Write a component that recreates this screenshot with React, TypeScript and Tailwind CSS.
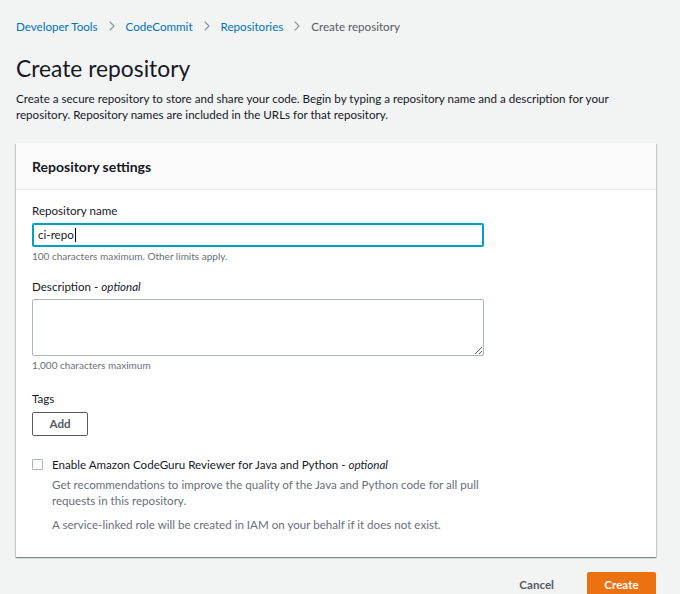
import { ChevronRight } from "lucide-react";

const crumbs = ["Developer Tools", "CodeCommit", "Repositories"];

export default function App() {
  return (
    <div
      className="min-h-[594px] w-[680px] overflow-hidden bg-[#f2f3f3] px-4 text-[#16191f]"
      style={{ fontFamily: 'Lato, Arial, sans-serif' }}
    >
      <nav className="flex h-[54px] items-center pb-[1px] text-[11.6px]">
        {crumbs.map((c) => (
          <span key={c} className="flex items-center">
            <span className="text-[#0073bb]">{c}</span>
            <ChevronRight className="mx-[6px] size-[16px] text-[#879596]" strokeWidth={1.6} />
          </span>
        ))}
        <span className="text-[#545b64]">Create repository</span>
      </nav>

      <h1 className="text-[22.8px] leading-[28px] font-normal">Create repository</h1>
      <p className="mt-[9px] pr-[30px] text-[11.6px] leading-[16px] text-[#16191f]">
        Create a secure repository to store and share your code. Begin by typing a repository name and a description for your
        repository. Repository names are included in the URLs for that repository.
      </p>

      <section className="mt-[20px] w-[640px] bg-white shadow-[0_1px_1px_0_rgba(0,28,36,0.3),1px_1px_1px_0_rgba(0,28,36,0.15),-1px_1px_1px_0_rgba(0,28,36,0.15)]">
        <div className="flex h-[47px] items-center border-b border-[#eaeded] bg-[#fafafa] px-4">
          <h2 className="text-[14px] font-bold">Repository settings</h2>
        </div>

        <div className="px-4 pt-[13px] pb-[24px]">
          <label className="block text-[11.6px] leading-[16px]">Repository name</label>
          <div className="mt-[4px] flex h-[24px] w-[452px] items-center rounded-[2px] border-2 border-[#00a1c9] px-[4px] text-[11.6px]">
            ci-repo<span className="ml-[1px] h-[14px] w-[1px] bg-black" />
          </div>
          <p className="mt-[2px] text-[10px] leading-[14px] text-[#687078]">100 characters maximum. Other limits apply.</p>

          <label className="mt-[16px] block text-[11.6px] leading-[16px]">
            Description - <i>optional</i>
          </label>
          <textarea className="mt-[4px] block h-[57px] w-[452px] rounded-[2px] border border-[#aab7b8] bg-white" />
          <p className="mt-[2px] text-[10px] leading-[14px] text-[#687078]">1,000 characters maximum</p>

          <label className="mt-[19px] block text-[11.6px] leading-[16px]">Tags</label>
          <button className="mt-[5px] block h-[24px] w-[56px] rounded-[2px] border border-[#545b64] text-[11.6px] font-bold text-[#545b64]">
            Add
          </button>

          <div className="mt-[21px] flex gap-[9px]">
            <span className="mt-[2px] size-[11px] shrink-0 rounded-[1px] border border-[#aab7b8]" />
            <div className="text-[11.6px] leading-[16px]">
              <div className="text-[#16191f]">
                Enable Amazon CodeGuru Reviewer for Java and Python - <i>optional</i>
              </div>
              <p className="mt-[4px] w-[440px] text-[#687078]">
                Get recommendations to improve the quality of the Java and Python code for all pull requests in this repository.
              </p>
              <p className="mt-[8px] text-[#687078]">A service-linked role will be created in IAM on your behalf if it does not exist.</p>
            </div>
          </div>
        </div>
      </section>

      <div className="mt-[15px] flex w-[640px] items-center justify-end gap-[33px]">
        <button className="text-[11.6px] font-bold text-[#545b64]">Cancel</button>
        <button className="h-[26px] w-[69px] rounded-[2px] bg-[#ec7211] text-[11.6px] font-bold text-white">Create</button>
      </div>
    </div>
  );
}
